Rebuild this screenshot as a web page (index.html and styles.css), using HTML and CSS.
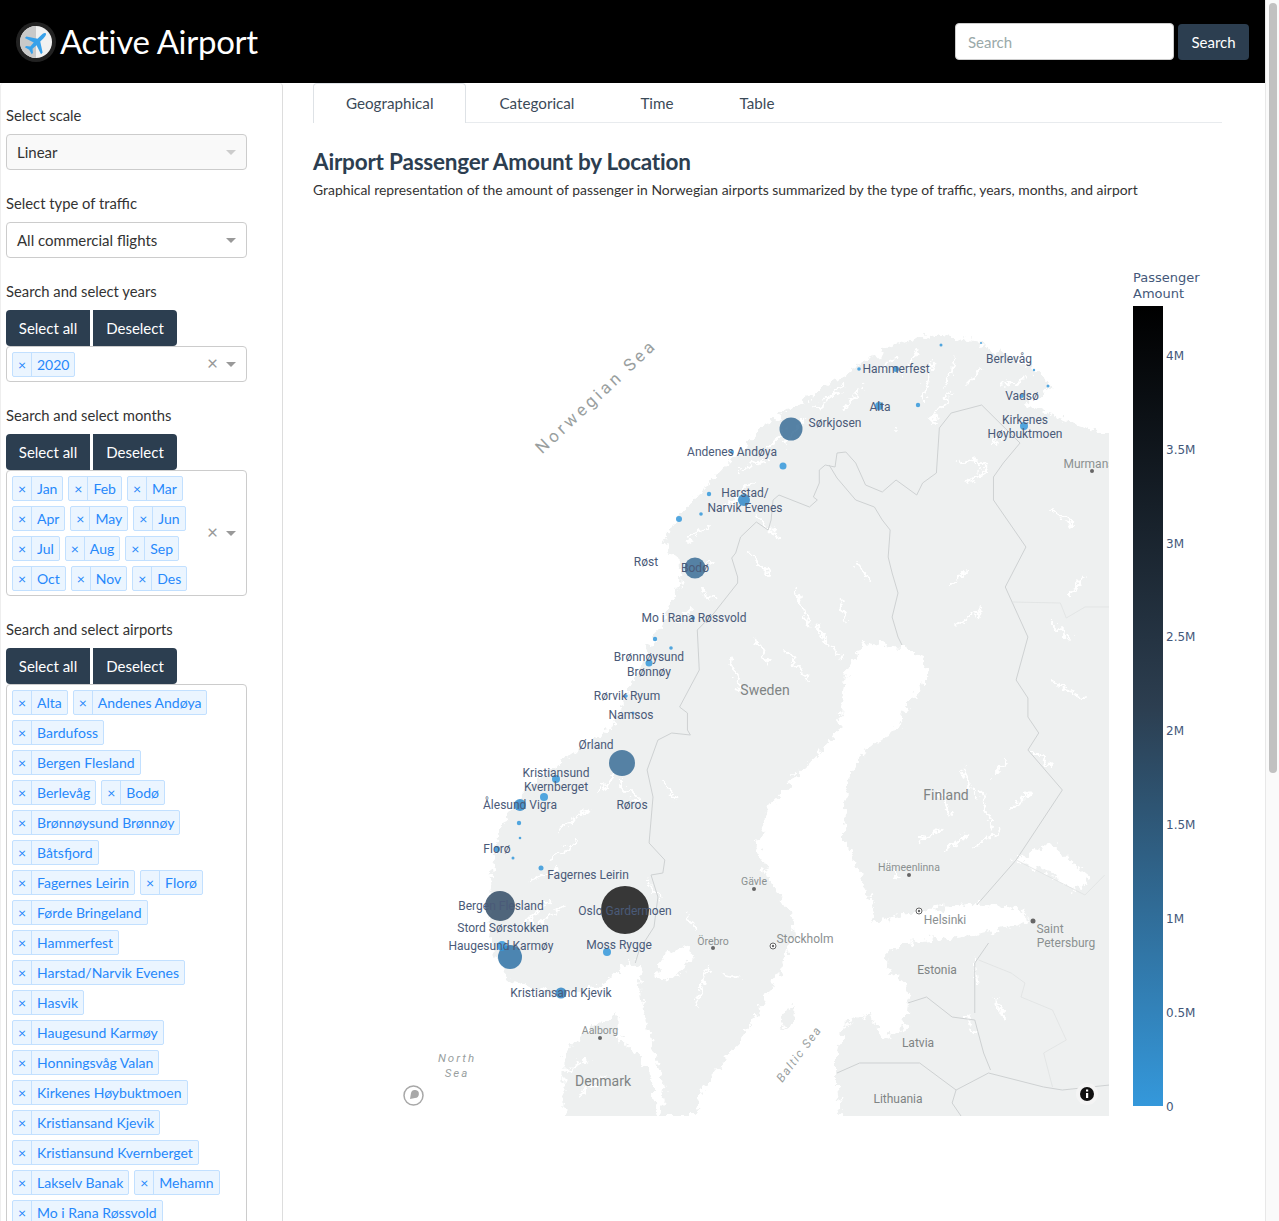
FILE: index.html
```html
<!DOCTYPE html>
<html>
<head>
    <title>Active Airport</title>
    <meta charset="UTF-8">
    <link rel="stylesheet" href="styles.css">
</head>
<body>
<div id="page">
    <div id="app">
        <header class="navbar">
            <div class="brand">
                <svg class="logo" width="40" height="40" viewBox="-20 -20 40 40">
                    <circle r="20" fill="#222"/>
                    <circle r="16" fill="#f1f1f1"/>
                    <path d="M0,-16A16,16 0 0 0 0,16Z" fill="#c9c9c9"/>
                    <path transform="translate(1 0) rotate(45) scale(.88)" fill="#38a1ea" d="M0,-14C1.800,-14 2.200,-11 2.200,-8L2.200,-3L13,4L13,6.500L2.200,3L1.800,9L5.500,12L5.500,14L0,12.500L-5.500,14L-5.500,12L-1.800,9L-2.200,3L-13,6.500L-13,4L-2.200,-3L-2.200,-8C-2.200,-11 -1.800,-14 0,-14Z"/>
                </svg>
                <span class="brand-name">Active Airport</span>
            </div>
            <form class="nav-search">
                <input class="nav-input" type="text" placeholder="Search">
                <button class="btn nav-btn" type="button">Search</button>
            </form>
        </header>

        <div class="content">
            <aside class="sidebar">
                <div class="field">
                    <label>Select scale</label>
                    <div class="select disabled"><span>Linear</span><i class="arrow"></i></div>
                </div>
                <div class="field">
                    <label>Select type of traffic</label>
                    <div class="select"><span>All commercial flights</span><i class="arrow"></i></div>
                </div>
                <div class="field">
                    <label>Search and select years</label>
                    <div class="btn-group"><button class="btn">Select all</button><button class="btn">Deselect</button></div>
                    <div class="multi">
                        <div class="chips">
                            <span class="chip"><b>×</b><span>2020</span></span>
                        </div>
                        <span class="clear">×</span><i class="arrow"></i>
                    </div>
                </div>
                <div class="field">
                    <label>Search and select months</label>
                    <div class="btn-group"><button class="btn">Select all</button><button class="btn">Deselect</button></div>
                    <div class="multi">
                        <div class="chips">
                            <span class="chip"><b>×</b><span>Jan</span></span>
                            <span class="chip"><b>×</b><span>Feb</span></span>
                            <span class="chip"><b>×</b><span>Mar</span></span>
                            <span class="chip"><b>×</b><span>Apr</span></span>
                            <span class="chip"><b>×</b><span>May</span></span>
                            <span class="chip"><b>×</b><span>Jun</span></span>
                            <span class="chip"><b>×</b><span>Jul</span></span>
                            <span class="chip"><b>×</b><span>Aug</span></span>
                            <span class="chip"><b>×</b><span>Sep</span></span>
                            <span class="chip"><b>×</b><span>Oct</span></span>
                            <span class="chip"><b>×</b><span>Nov</span></span>
                            <span class="chip"><b>×</b><span>Des</span></span>
                        </div>
                        <span class="clear">×</span><i class="arrow"></i>
                    </div>
                </div>
                <div class="field">
                    <label>Search and select airports</label>
                    <div class="btn-group"><button class="btn">Select all</button><button class="btn">Deselect</button></div>
                    <div class="multi">
                        <div class="chips">
                            <span class="chip"><b>×</b><span>Alta</span></span>
                            <span class="chip"><b>×</b><span>Andenes Andøya</span></span>
                            <span class="chip"><b>×</b><span>Bardufoss</span></span>
                            <span class="chip"><b>×</b><span>Bergen Flesland</span></span>
                            <span class="chip"><b>×</b><span>Berlevåg</span></span>
                            <span class="chip"><b>×</b><span>Bodø</span></span>
                            <span class="chip"><b>×</b><span>Brønnøysund Brønnøy</span></span>
                            <span class="chip"><b>×</b><span>Båtsfjord</span></span>
                            <span class="chip"><b>×</b><span>Fagernes Leirin</span></span>
                            <span class="chip"><b>×</b><span>Florø</span></span>
                            <span class="chip"><b>×</b><span>Førde Bringeland</span></span>
                            <span class="chip"><b>×</b><span>Hammerfest</span></span>
                            <span class="chip"><b>×</b><span>Harstad/Narvik Evenes</span></span>
                            <span class="chip"><b>×</b><span>Hasvik</span></span>
                            <span class="chip"><b>×</b><span>Haugesund Karmøy</span></span>
                            <span class="chip"><b>×</b><span>Honningsvåg Valan</span></span>
                            <span class="chip"><b>×</b><span>Kirkenes Høybuktmoen</span></span>
                            <span class="chip"><b>×</b><span>Kristiansand Kjevik</span></span>
                            <span class="chip"><b>×</b><span>Kristiansund Kvernberget</span></span>
                            <span class="chip"><b>×</b><span>Lakselv Banak</span></span>
                            <span class="chip"><b>×</b><span>Mehamn</span></span>
                            <span class="chip"><b>×</b><span>Mo i Rana Røssvold</span></span>
                        </div>
                    </div>
                </div>
            </aside>

            <main class="main">
                <nav class="tabs">
                    <a class="tab active">Geographical</a>
                    <a class="tab">Categorical</a>
                    <a class="tab">Time</a>
                    <a class="tab">Table</a>
                </nav>
                <h2 class="title">Airport Passenger Amount by Location</h2>
                <p class="subtitle">Graphical representation of the amount of passenger in Norwegian airports summarized by the type of traffic, years, months, and airport</p>

                <!-- map: viewBox uses page coordinates -->
                <svg class="chart" width="909" height="925" viewBox="313 205 909 925">
                    <defs>
                        <clipPath id="mapclip"><rect x="383" y="300" width="726" height="816"/></clipPath>
                        <filter id="rough" x="-5%" y="-5%" width="110%" height="110%">
                            <feTurbulence type="fractalNoise" baseFrequency="0.13" numOctaves="4" seed="4"/>
                            <feDisplacementMap in="SourceGraphic" scale="15" xChannelSelector="R" yChannelSelector="G"/>
                            <feGaussianBlur stdDeviation="0.4"/>
                        </filter>
                        <filter id="soft"><feGaussianBlur stdDeviation="0.35"/></filter>
                        <linearGradient id="cbar" x1="0" y1="1" x2="0" y2="0">
                            <stop offset="0" stop-color="#3498db"/>
                            <stop offset="0.5" stop-color="#2c3e50"/>
                            <stop offset="1" stop-color="#000"/>
                        </linearGradient>
                    </defs>

                    <g clip-path="url(#mapclip)">
                        <g transform="translate(7.5 0) scale(.984 1)">
                            <g filter="url(#rough)">
                                <path class="land" d="M944,335L905,343L862,367L823,393L788,413L761,433L732,463L710,487L687,510L668,537L672,552L683,560L684,585L675,603L656,640L640,673L613,727L582,750L540,777L512,807L498,837L493,870L489,910L493,947L507,977L559,997L605,983L633,960L642,967L645,1000L655,1040L668,1090L664,1116L699,1116L708,1087L736,1053L754,1027L773,993L787,967L801,927L792,907L773,877L761,847L773,807L801,777L843,733L854,667L870,643L909,647L932,660L936,677L909,713L906,727L871,753L852,787L850,837L866,873L880,907L880,923L927,910L983,903L1025,907L1041,920L997,933L913,943L894,953L894,967L913,983L915,1003L913,1027L890,1040L876,1013L852,1023L843,1053L843,1087L848,1120L1140,1120L1140,432L1109,432L1075,420L1055,412L1030,405L1060,387L1041,367L986,343Z"/>
                                <path class="land" d="M566,1120L566,1053L577,1040L619,1013L619,1037L638,1053L655,1078L660,1120Z"/>
                                <path class="land" d="M786,1030L790,1012L800,1005L798,1022Z"/>
                                <g class="water">
                                    <path class="big" d="M1025,860L1060,845L1100,878L1085,890L1055,870Z"/>
                                    <path class="big" d="M661,977L668,955L690,947L694,958L680,977Z"/>
                                    <path d="M700,1005L706,985L711,968"/>
                                    <path d="M725,975L745,978M690,915L700,930M648,880L665,900"/>
                                    <path d="M982,960L986,985"/>
                                    <path d="M967,465L982,458L996,470L975,482M1000,445L1015,432"/>
                                    <path d="M938,418L944,424M905,432L904,430M960,390L940,420"/>
                                    <path d="M760,515L785,540M752,550L775,575M800,590L815,625M845,600L852,622M862,565L876,580M820,625L848,660"/>
                                    <path d="M760,640L775,665M735,660L745,690M790,650L815,680"/>
                                    <path d="M958,585L975,570M990,610L965,625M1060,510L1085,525M1080,595L1095,575M1060,620L1080,640M1060,680L1095,700"/>
                                    <path d="M945,790L960,815M970,770L985,800M990,790L1000,830M925,840L950,830M955,850L975,835M1000,775L1015,760M1020,810L1040,790M980,850L1010,830M1040,750L1060,765"/>
                                    <path d="M893,860L905,880M665,780L680,800M620,780L640,800"/>
                                    <path d="M1005,1000L1012,1020M975,1015L984,1035"/>
                                    <path d="M560,1075L590,1060M580,1095L610,1075"/>
                                    <path d="M560,830L590,810M550,860L580,840M530,880L560,870M520,930L550,900M540,925L565,905M620,770L600,795M700,570L720,560M730,510L760,480M770,450L790,430M820,410L850,385M890,370L905,355M940,360L930,400M990,370L975,385M1010,385L1035,378"/>
                                    <path d="M690,540L715,525M705,590L720,600M680,625L695,610M745,470L770,460M790,445L810,420M850,410L870,385M910,375L925,350M965,355L955,385"/>
                                </g>
                            </g>
                            <g filter="url(#soft)">
                                <path class="border" d="M990,405L959,413L947,428L944,473L930,483L924,495L903,480L889,492L872,485L862,463L852,452L843,453L841,467L831,465L825,470L825,483L819,497L823,500L815,507L784,495L778,500L776,520L773,530L761,522L745,537L740,553L736,558L742,577L742,583L718,613L701,630L703,670L683,707L691,713L691,730L694,735L675,733L661,740L650,770L656,797L652,843L668,860L666,873L654,875L661,897L657,927L642,950L638,963"/>
                                <path class="border" d="M835,465L843,478L862,500L881,507L889,520L897,530L895,557L899,573L905,593L899,617L905,637L909,645"/>
                                <path class="border" d="M990,405L1029,443L1012,463L1002,477L1002,500L1021,527L1035,547L1014,587L1037,637L1025,680L1037,698L1037,717L1048,733L1037,750L1072,790L1025,860L985,905"/>
                                <path class="border" d="M997,943L983,963L983,1013M915,1003L934,997L960,1017L983,1020L992,1053L999,1070M843,1073L866,1063L927,1063L964,1090L997,1073L1053,1087L1072,1090L1120,1085M964,1090L960,1103L969,1116"/>
                                <path class="border thin" d="M987,960L1020,973L1034,983L1030,997L1062,1010L1076,1040L1053,1053L1062,1087M1021,602L1070,603L1076,618L1095,607L1130,607M1025,860L1095,895L1115,875"/>
                            </g>
                        </g>

                        <g class="base">
                            <text class="sea" x="596" y="402" transform="rotate(-43 596 396)">Norwegian Sea</text>
                            <text class="sea north" x="457" y="1062">North</text>
                            <text class="sea north" x="457" y="1077">Sea</text>
                            <text class="sea baltic" x="799" y="1058" transform="rotate(-53 799 1054)">Baltic Sea</text>
                            <text class="country" x="765" y="695">Sweden</text>
                            <text class="country" x="946" y="800">Finland</text>
                            <text class="country" x="603" y="1086">Denmark</text>
                            <text class="country small" x="937" y="974">Estonia</text>
                            <text class="country small" x="918" y="1047">Latvia</text>
                            <text class="country small" x="898" y="1103">Lithuania</text>
                            <text class="city" x="1092" y="468">Murmansk</text>
                            <text class="city tiny" x="909" y="871">Hämeenlinna</text>
                            <text class="city tiny" x="754" y="885">Gävle</text>
                            <text class="city" x="945" y="924">Helsinki</text>
                            <text class="city" x="1050" y="933">Saint</text>
                            <text class="city" x="1066" y="947">Petersburg</text>
                            <text class="city tiny" x="713" y="945">Örebro</text>
                            <text class="city" x="805" y="943">Stockholm</text>
                            <text class="city tiny" x="600" y="1034">Aalborg</text>
                            <circle class="dot" cx="1092" cy="471" r="2"/>
                            <circle class="dot" cx="909" cy="875" r="2"/>
                            <circle class="dot" cx="754" cy="889" r="2"/>
                            <circle class="dot" cx="1033" cy="921" r="2.500"/>
                            <circle class="dot" cx="713" cy="948" r="2"/>
                            <circle class="dot" cx="600" cy="1038" r="2"/>
                            <circle class="ring" cx="919" cy="911" r="3"/><circle class="dot" cx="919" cy="911" r="1.200"/>
                            <circle class="ring" cx="773" cy="946" r="3"/><circle class="dot" cx="773" cy="946" r="1.200"/>
                        </g>

                        <g class="bubbles">
                            <circle cx="625" cy="910" r="24" fill="#161616"/>
                            <circle cx="500" cy="906" r="15" fill="#324c66"/>
                            <circle cx="510" cy="957" r="12" fill="#2f72a6"/>
                            <circle cx="791" cy="429" r="11.500" fill="#3a6d96"/>
                            <circle cx="622" cy="763" r="13" fill="#3a6d96"/>
                            <circle cx="695" cy="568" r="10.500" fill="#3a6d96"/>
                            <circle cx="561" cy="993" r="5.500" fill="#2f85c6"/>
                            <circle cx="520" cy="805" r="6" fill="#3088c9"/>
                            <circle cx="744" cy="500" r="6" fill="#3088c9"/>
                            <circle cx="607" cy="952" r="4" fill="#3498db"/>
                            <circle cx="1024" cy="426" r="4" fill="#3498db"/>
                            <circle cx="879" cy="406" r="4" fill="#3498db"/>
                            <circle cx="896" cy="369" r="3" fill="#3498db"/>
                            <circle cx="556" cy="779" r="4" fill="#3498db"/>
                            <circle cx="544" cy="797" r="4" fill="#3498db"/>
                            <circle cx="497" cy="849" r="3" fill="#3498db"/>
                            <circle cx="649" cy="663" r="3.500" fill="#3498db"/>
                            <circle cx="783" cy="466" r="3.500" fill="#3498db"/>
                            <circle cx="502" cy="946" r="5" fill="#3498db"/>
                            <circle cx="679" cy="519" r="3" fill="#3498db"/>
                            <circle cx="541" cy="868" r="2.500" fill="#3498db"/>
                            <circle cx="941" cy="345" r="1.500" fill="#3498db"/>
                            <circle cx="981" cy="343" r="1" fill="#3498db"/>
                            <circle cx="1034" cy="370" r="1.200" fill="#3498db"/>
                            <circle cx="1048" cy="386" r="1.500" fill="#3498db"/>
                            <circle cx="859" cy="369" r="1.800" fill="#3498db"/>
                            <circle cx="918" cy="405" r="2.200" fill="#3498db"/>
                            <circle cx="1022" cy="396" r="2" fill="#3498db"/>
                            <circle cx="732" cy="452" r="2" fill="#3498db"/>
                            <circle cx="709" cy="494" r="2.200" fill="#3498db"/>
                            <circle cx="701" cy="514" r="1.800" fill="#3498db"/>
                            <circle cx="693" cy="618" r="2" fill="#3498db"/>
                            <circle cx="655" cy="639" r="2.200" fill="#3498db"/>
                            <circle cx="671" cy="648" r="1.800" fill="#3498db"/>
                            <circle cx="626" cy="696" r="1.800" fill="#3498db"/>
                            <circle cx="633" cy="713" r="1.500" fill="#3498db"/>
                            <circle cx="519" cy="823" r="2.200" fill="#3498db"/>
                            <circle cx="520" cy="838" r="1.300" fill="#3498db"/>
                            <circle cx="513" cy="858" r="1.500" fill="#3498db"/>
                        </g>

                        <g class="labels">
                            <text x="896" y="373">Hammerfest</text>
                            <text x="1009" y="363">Berlevåg</text>
                            <text x="1022" y="400">Vadsø</text>
                            <text x="880" y="411">Alta</text>
                            <text x="835" y="427">Sørkjosen</text>
                            <text x="1025" y="424">Kirkenes</text>
                            <text x="1025" y="438">Høybuktmoen</text>
                            <text x="732" y="456">Andenes Andøya</text>
                            <text x="745" y="497">Harstad/</text>
                            <text x="745" y="512">Narvik Evenes</text>
                            <text x="646" y="566">Røst</text>
                            <text x="695" y="572">Bodø</text>
                            <text x="694" y="622">Mo i Rana Røssvold</text>
                            <text x="649" y="661">Brønnøysund</text>
                            <text x="649" y="676">Brønnøy</text>
                            <text x="627" y="700">Rørvik Ryum</text>
                            <text x="631" y="719">Namsos</text>
                            <text x="596" y="749">Ørland</text>
                            <text x="556" y="777">Kristiansund</text>
                            <text x="556" y="791">Kvernberget</text>
                            <text x="520" y="809">Ålesund Vigra</text>
                            <text x="632" y="809">Røros</text>
                            <text x="497" y="853">Florø</text>
                            <text x="588" y="879">Fagernes Leirin</text>
                            <text x="501" y="910">Bergen Flesland</text>
                            <text x="625" y="915">Oslo Gardermoen</text>
                            <text x="503" y="932">Stord Sørstokken</text>
                            <text x="501" y="950">Haugesund Karmøy</text>
                            <text x="619" y="949">Moss Rygge</text>
                            <text x="561" y="997">Kristiansand Kjevik</text>
                        </g>
                    </g>

                    <g class="map-logo">
                        <circle cx="413.500" cy="1095.500" r="9.500"/>
                        <path d="M410,1099L411,1093A4,4 0 1 1 415,1098Z"/>
                    </g>
                    <g class="map-info">
                        <circle class="halo" cx="1087" cy="1094" r="11"/>
                        <circle cx="1087" cy="1094" r="7"/>
                        <rect class="stem" x="1086" y="1093" width="2.200" height="5"/>
                        <rect class="stem" x="1086" y="1089.500" width="2.200" height="2"/>
                    </g>

                    <rect x="1133" y="306" width="30" height="800" fill="url(#cbar)"/>
                    <g class="cbar-text">
                        <text class="cbar-title" x="1133" y="282">Passenger</text>
                        <text class="cbar-title" x="1133" y="298">Amount</text>
                        <text x="1166" y="360">4M</text>
                        <text x="1166" y="454">3.5M</text>
                        <text x="1166" y="548">3M</text>
                        <text x="1166" y="641">2.5M</text>
                        <text x="1166" y="735">2M</text>
                        <text x="1166" y="829">1.5M</text>
                        <text x="1166" y="923">1M</text>
                        <text x="1166" y="1017">0.5M</text>
                        <text x="1166" y="1111">0</text>
                    </g>
                </svg>
            </main>
        </div>
    </div>
    <div class="scrollbar"><div class="thumb"></div></div>
</div>
</body>
</html>
```

FILE: styles.css
```css
* {
    box-sizing: border-box;
}

body {
    margin: 0;
    font-family: Lato, "Open Sans", sans-serif;
    font-size: 15px;
    color: #2b2b2b;
    background: #fff;
}

#page {
    display: flex;
    height: 1221px;
    overflow: hidden;
}

#app {
    flex: 1;
    min-width: 0;
}

.scrollbar {
    width: 14px;
    flex: none;
    padding: 3px 1px 0 3px;
    background: #fafafa;
    border-left: 1px solid #e8e8e8;
}

.thumb {
    width: 8px;
    height: 770px;
    background: #c1c1c1;
    border-radius: 4px;
}

/* top bar */
.navbar {
    display: flex;
    align-items: center;
    justify-content: space-between;
    height: 83px;
    padding: 0 16px 0 16px;
    background: #000;
}

.brand {
    display: flex;
    align-items: center;
    gap: 4px;
    color: #fff;
}

.brand-name {
    padding-bottom: 1px;
    font-size: 33px;
    letter-spacing: -0.3px;
}

.nav-search {
    display: flex;
    align-items: center;
    gap: 4px;
}

.nav-input {
    width: 219px;
    height: 37px;
    padding: 0 12px;
    border: 1px solid #ccc;
    border-radius: 4px;
    font: 15px Lato, sans-serif;
    background: #fff;
}

.nav-input::placeholder {
    color: #9aa9a9;
}

.btn {
    height: 36px;
    padding: 0 13px;
    border: 0;
    border-radius: 4px;
    background: #2c3e50;
    color: #fff;
    font: 15px Lato, sans-serif;
}

.nav-btn {
    width: 71px;
    padding: 0;
}

/* sidebar */
.content {
    display: flex;
    align-items: flex-start;
}

.sidebar {
    width: 283px;
    height: 1138px;
    flex: none;
    padding: 22px 0 0 5px;
    border-right: 1px solid #ddd;
    border-left: 1px solid #eee;
    border-top-right-radius: 4px;
    border-top-left-radius: 4px;
}

.field {
    width: 241px;
    margin-bottom: 23px;
}

.field label {
    display: block;
    height: 21px;
    margin-bottom: 8px;
    font-size: 14.800px;
    line-height: 21px;
    color: #333;
}

.select {
    position: relative;
    height: 36px;
    padding-left: 10px;
    border: 1px solid #ccc;
    border-radius: 4px;
    font-size: 15px;
    line-height: 34px;
    color: #333;
}

.select.disabled {
    background: #f9f9f9;
}

.select.disabled .arrow {
    border-top-color: #ccc;
}

.arrow {
    position: absolute;
    right: 10px;
    top: 50%;
    margin-top: -2px;
    border: 5px solid transparent;
    border-top-color: #999;
    border-bottom: 0;
}

.btn-group {
    display: flex;
    gap: 3px;
}

.btn-group .btn {
    width: 84px;
    padding: 0;
    border-radius: 4px 0 0 4px;
}

.btn-group .btn + .btn {
    border-radius: 0 4px 4px 0;
}

.multi {
    position: relative;
    min-height: 36px;
    padding-bottom: 4px;
    border: 1px solid #ccc;
    border-radius: 4px;
}

.chips {
    display: flex;
    flex-wrap: wrap;
    width: 218px;
}

.chip {
    display: flex;
    height: 25px;
    margin: 5px 0 0 5px;
    border: 1px solid #c2e0ff;
    border-radius: 2px;
    background: #ebf5ff;
    color: #2688fb;
    font-size: 14px;
    line-height: 23px;
}

.chip b {
    width: 19px;
    border-right: 1px solid #c2e0ff;
    font-weight: 400;
    font-size: 14px;
    text-align: center;
}

.chip span {
    padding: 0 5px;
}

.clear {
    position: absolute;
    top: 50%;
    right: 28px;
    margin-top: -12px;
    font-size: 19px;
    line-height: 22px;
    color: #999;
}

/* main part */
.main {
    width: 909px;
    margin-left: 30px;
}

.tabs {
    display: flex;
    height: 40px;
    border-bottom: 1px solid #e8ebee;
}

.tab {
    height: 40px;
    padding: 0 32px;
    font-size: 15.200px;
    line-height: 38px;
    color: #3b4a58;
    border: 1px solid transparent;
    border-bottom: 0;
}

.tab.active {
    background: #fff;
    border-color: #dee2e6;
    border-radius: 4px 4px 0 0;
}

.title {
    margin: 26px 0 0;
    font-size: 22.500px;
    line-height: 26px;
    font-weight: 700;
    letter-spacing: -0.2px;
    color: #2c3e50;
}

.subtitle {
    margin: 5px 0 0;
    font-size: 13.900px;
    line-height: 20px;
    color: #333;
}

.chart {
    display: block;
    margin-top: 5px;
}

/* map layers */
.land {
    fill: #eef0f0;
}

.water path {
    fill: none;
    stroke: #fff;
    stroke-width: 2.500;
}

.water path.big {
    fill: #fff;
}

.border {
    fill: none;
    stroke: #cdd0d1;
    stroke-width: 1;
}

.border.thin {
    stroke: #dfe2e2;
    stroke-width: 0.800;
}

.base text {
    font-family: Roboto, sans-serif;
    text-anchor: middle;
    fill: #8b9091;
}

.base .sea {
    font-size: 17px;
    letter-spacing: 3.400px;
    fill: #9a9f9f;
}

.base .sea.north {
    font-size: 11.500px;
    font-style: italic;
    letter-spacing: 2px;
}

.base .sea.baltic {
    font-size: 12px;
    font-style: italic;
    letter-spacing: 1.500px;
}

.base .country {
    font-size: 14px;
    fill: #7f8484;
}

.base .country.small {
    font-size: 12px;
}

.city {
    font-size: 12px;
}

.city.tiny {
    font-size: 10.500px;
}

.dot {
    fill: #666;
}

.ring {
    fill: #fff;
    stroke: #666;
}

.bubbles circle {
    opacity: 0.85;
}

.labels text {
    font-family: Roboto, sans-serif;
    font-size: 12px;
    text-anchor: middle;
    fill: #4a5a78;
}

.map-logo circle {
    fill: #fff;
    stroke: #a8a8a8;
    stroke-width: 1.500;
}

.map-logo path {
    fill: #a8a8a8;
}

.map-info circle {
    fill: #111;
}

.map-info .halo {
    fill: #f4f4f4;
}

.map-info .stem {
    fill: #fff;
}

.cbar-text text {
    font-family: "DejaVu Sans", sans-serif;
    font-size: 12px;
    fill: #44587a;
}

.cbar-text .cbar-title {
    font-size: 13px;
}
```
